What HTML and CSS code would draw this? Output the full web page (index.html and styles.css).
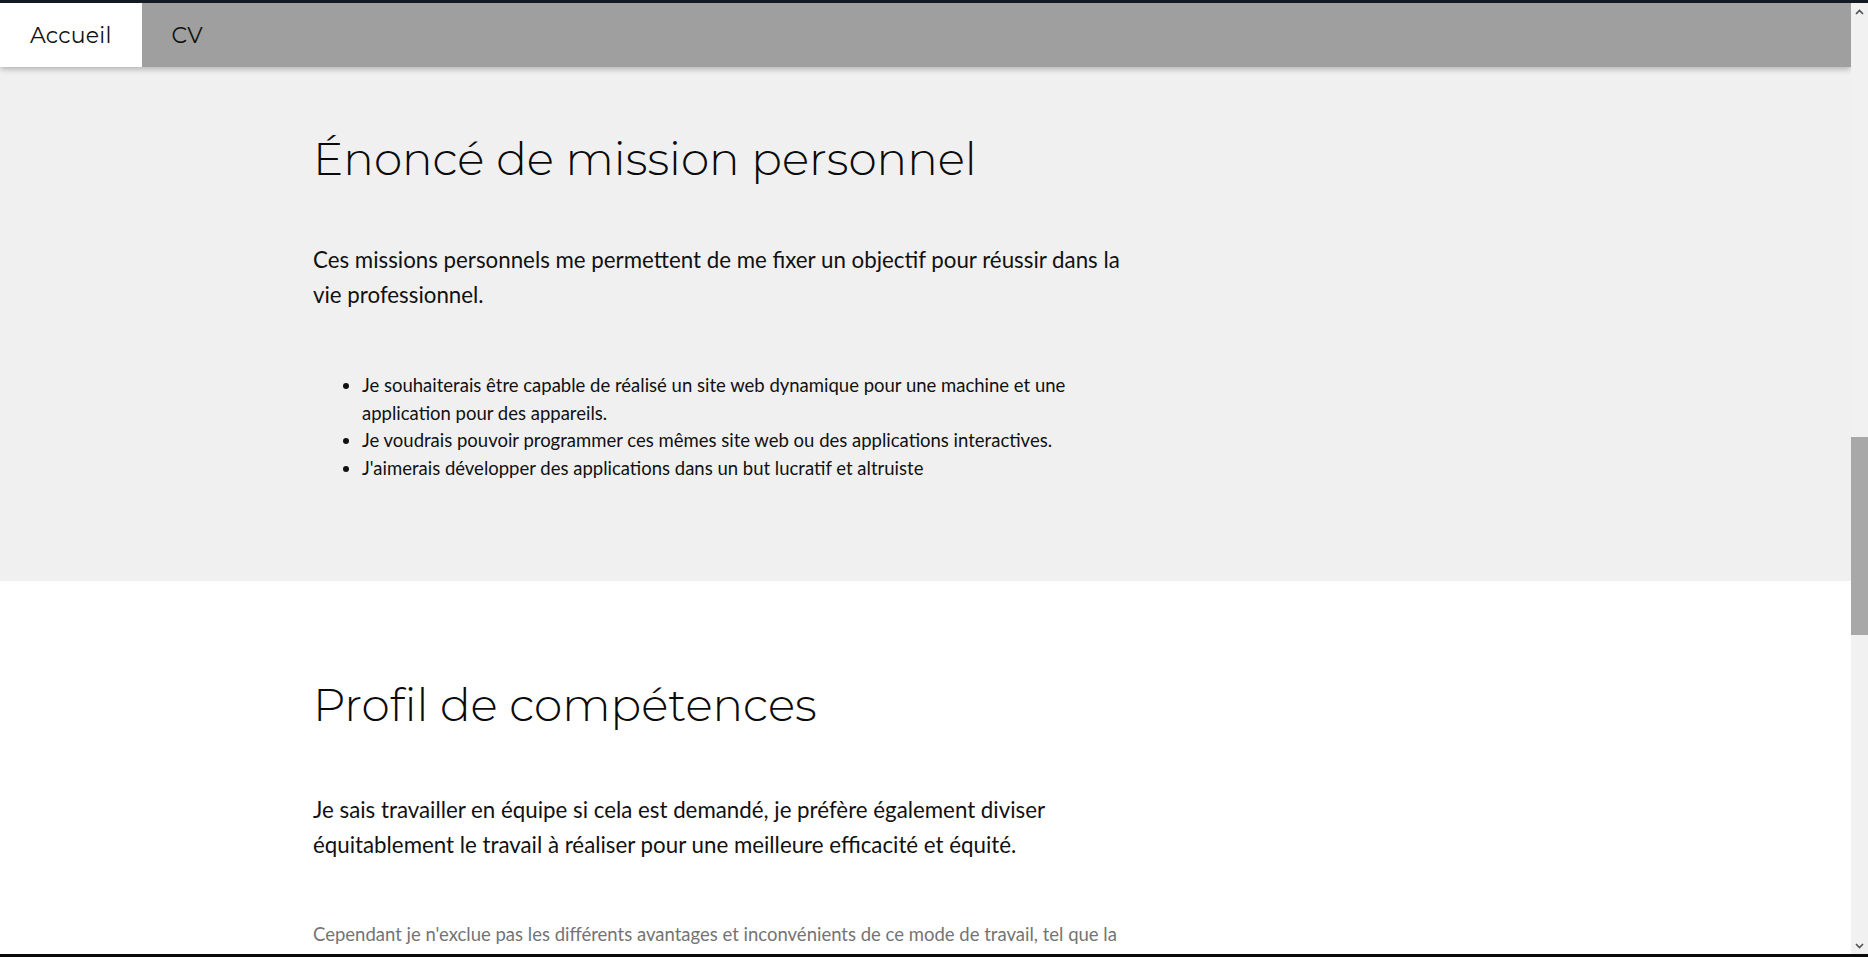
FILE: index.html
```html
<!DOCTYPE html>
<html lang="fr">
<head>
<meta charset="utf-8">
<title>Accueil</title>
<link rel="stylesheet" href="styles.css">
</head>
<body>
<div class="frame-top"></div>
<div class="window">
  <div class="main">
    <nav class="nav">
      <a class="tab tab-active" href="#">Accueil</a>
      <a class="tab" href="#">CV</a>
    </nav>
    <div class="content">
      <section class="section section-gray">
        <h1 class="title">Énoncé de mission personnel</h1>
        <p class="lead lead-first">Ces missions personnels me permettent de me fixer un objectif pour réussir dans la vie professionnel.</p>
        <ul class="goals">
          <li>Je souhaiterais être capable de réalisé un site web dynamique pour une machine et une application pour des appareils.</li>
          <li>Je voudrais pouvoir programmer ces mêmes site web ou des applications interactives.</li>
          <li>J'aimerais développer des applications dans un but lucratif et altruiste</li>
        </ul>
      </section>
      <section class="section section-white">
        <h2 class="title title-second">Profil de compétences</h2>
        <p class="lead lead-second">Je sais travailler en équipe si cela est demandé, je préfère également diviser équitablement le travail à réaliser pour une meilleure efficacité et équité.</p>
        <p class="note">Cependant je n'exclue pas les différents avantages et inconvénients de ce mode de travail, tel que la communication et l'organisation.</p>
      </section>
    </div>
  </div>
  <div class="scrollbar">
    <div class="sb-btn">
      <svg width="9" height="6" viewBox="0 0 9 6"><polyline points="1,5 4.5,1.5 8,5" fill="none" stroke="#505050" stroke-width="1.6"/></svg>
    </div>
    <div class="sb-track">
      <div class="sb-thumb"></div>
    </div>
    <div class="sb-btn">
      <svg width="9" height="6" viewBox="0 0 9 6"><polyline points="1,1 4.5,4.5 8,1" fill="none" stroke="#505050" stroke-width="1.6"/></svg>
    </div>
  </div>
</div>
<div class="frame-bottom"></div>
</body>
</html>
```
FILE: styles.css
```css
html, body {
  margin: 0;
  padding: 0;
  height: 957px;
  overflow: hidden;
}
body {
  display: flex;
  flex-direction: column;
  background: #ffffff;
  font-family: "Lato", "Liberation Sans", sans-serif;
  color: #111111;
}
.frame-top {
  height: 3px;
  background: #131a22;
  flex: none;
}
.frame-bottom {
  height: 3px;
  background: #0a0a0a;
  flex: none;
}
.window {
  flex: 1;
  display: flex;
  min-height: 0;
}
.main {
  flex: 1;
  display: flex;
  flex-direction: column;
  min-width: 0;
  position: relative;
  overflow: hidden;
}
.nav {
  height: 64px;
  flex: none;
  display: flex;
  background: #9f9f9f;
  box-shadow: 0 2px 6px rgba(0, 0, 0, 0.28);
  position: relative;
  z-index: 2;
}
.tab {
  display: flex;
  align-items: center;
  padding: 0 30px;
  font-family: "Montserrat", "Inter", sans-serif;
  font-weight: 400;
  font-size: 22px;
  color: #111111;
  text-decoration: none;
  letter-spacing: 0.2px;
}
.tab-active {
  background: #ffffff;
}
.content {
  flex: 1;
  min-height: 0;
}
.section {
  padding-left: 313px;
}
.section-gray {
  background: #f0f0f0;
  padding-top: 64px;
  padding-bottom: 99px;
}
.section-white {
  background: #ffffff;
  padding-top: 96px;
}
.title {
  margin: 0;
  font-family: "Montserrat", "Inter", sans-serif;
  font-weight: 300;
  font-size: 45.4px;
  line-height: 55px;
  color: #0a0a0a;
}
.lead {
  margin: 0;
  max-width: 830px;
  font-size: 22.3px;
  line-height: 35px;
  color: #111111;
}
.lead-first {
  margin-top: 56px;
}
.lead-second {
  margin-top: 60px;
}
.note {
  margin: 59px 0 0 0;
  max-width: 830px;
  font-size: 18.5px;
  line-height: 27.5px;
  color: #747474;
}
.goals {
  margin: 60px 0 0 0;
  padding-left: 49px;
  max-width: 790px;
  font-size: 18.5px;
  line-height: 27.5px;
  color: #111111;
}
.scrollbar {
  width: 17px;
  flex: none;
  display: flex;
  flex-direction: column;
  background: #f1f1f1;
}
.sb-btn {
  height: 17px;
  flex: none;
  display: flex;
  align-items: center;
  justify-content: center;
}
.sb-track {
  flex: 1;
}
.sb-thumb {
  margin-top: 417px;
  height: 198px;
  background: #a8a8a8;
}
```
